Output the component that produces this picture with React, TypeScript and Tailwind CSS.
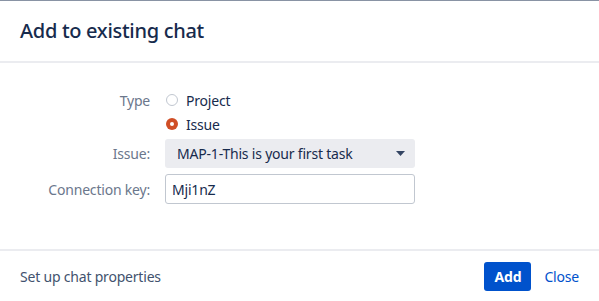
import React, { useState } from 'react';

const AddToChat = () => {
  const [type, setType] = useState('issue');
  const [key, setKey] = useState('Mji1nZ');

  const Radio = ({ value, label }: { value: string; label: string }) => {
    const checked = type === value;
    return (
      <label className="flex items-center h-6 cursor-pointer" onClick={() => setType(value)}>
        {checked ? (
          <span className="w-3 h-3 rounded-full bg-[#d04e26] flex items-center justify-center ml-px">
            <span className="w-1 h-1 rounded-full bg-white" />
          </span>
        ) : (
          <span className="w-3 h-3 rounded-full border border-[#c1c7d0] bg-white ml-px" />
        )}
        <span className="ml-2 text-[14px] text-[#172b4d]">{label}</span>
      </label>
    );
  };

  return (
    <div className="w-[599px] h-[301px] bg-white border-t border-[#8993a4] flex flex-col font-['Noto_Sans',sans-serif] tracking-[-0.2px]">
      <div className="h-[60px] px-5 flex items-center">
        <h2 className="text-[20px] font-medium text-[#172b4d] tracking-[-0.3px]">Add to existing chat</h2>
      </div>
      <div className="h-[2px] bg-[#ebecf0]" />

      <div className="flex-1 pt-[25px]">
        <div className="grid grid-cols-[150px_250px] gap-x-[15px] text-[14px]">
          <div className="h-6 flex items-center justify-end text-[#6b778c]">Type</div>
          <div className="flex flex-col">
            <Radio value="project" label="Project" />
            <Radio value="issue" label="Issue" />
          </div>

          <div className="mt-[3px] h-[29px] flex items-center justify-end text-[#6b778c]">Issue:</div>
          <div className="mt-[3px] h-[29px] rounded-[3px] bg-[#ebecf0] flex items-center justify-between pl-3 pr-[10px] text-[#172b4d]">
            <span>MAP-1-This is your first task</span>
            <svg width="9" height="5" viewBox="0 0 9 5">
              <path d="M0 0h9L4.5 5z" fill="#344563" />
            </svg>
          </div>

          <div className="mt-[6px] h-[30px] flex items-center justify-end text-[#6b778c]">Connection key:</div>
          <input
            value={key}
            onChange={(e) => setKey(e.target.value)}
            className="mt-[6px] h-[30px] rounded-[3px] border border-[#c1c7d0] px-[6px] text-[14px] text-[#172b4d] outline-none"
          />
        </div>
      </div>

      <div className="h-[2px] bg-[#ebecf0]" />
      <div className="h-[50px] px-5 flex items-center justify-between text-[14px]">
        <span className="text-[#42526e]">Set up chat properties</span>
        <div className="flex items-center gap-[13px]">
          <button className="h-[29px] w-[47px] rounded-[3px] bg-[#0052cc] text-white font-bold">Add</button>
          <button className="text-[#0052cc]">Close</button>
        </div>
      </div>
    </div>
  );
};

export default AddToChat;
